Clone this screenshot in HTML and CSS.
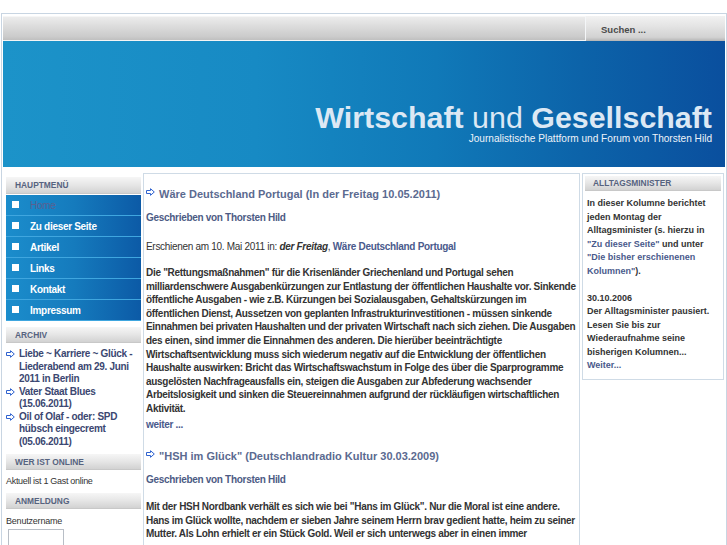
FILE: index.html
```html
<!DOCTYPE html>
<html lang="de">
<head>
<meta charset="utf-8">
<title>Wirtschaft und Gesellschaft</title>
<link rel="stylesheet" href="styles.css">
</head>
<body>
<div class="page">
  <div class="topbar">
    <div class="toolbar"></div>
    <div class="search">Suchen ...</div>
  </div>
  <div class="header">
    <div class="site-title"><b>Wirtschaft</b> und <b>Gesellschaft</b></div>
    <div class="site-sub">Journalistische Plattform und Forum von Thorsten Hild</div>
  </div>
  <div class="cols">
    <aside class="left">
      <div class="mod-head first">Hauptmenü</div>
      <ul class="menu">
        <li class="active"><span class="sq"></span>Home</li>
        <li><span class="sq"></span>Zu dieser Seite</li>
        <li><span class="sq"></span>Artikel</li>
        <li><span class="sq"></span>Links</li>
        <li><span class="sq"></span>Kontakt</li>
        <li><span class="sq"></span>Impressum</li>
      </ul>
      <div class="mod-head">Archiv</div>
      <ul class="archive">
        <li><svg class="arr" viewBox="0 0 9 8"><path d="M0.5 2.5H4.5V0.7L8.3 4L4.5 7.3V5.5H0.5Z"/></svg><span>Liebe ~ Karriere ~ Glück - Liederabend am 29. Juni 2011 in Berlin</span></li>
        <li><svg class="arr" viewBox="0 0 9 8"><path d="M0.5 2.5H4.5V0.7L8.3 4L4.5 7.3V5.5H0.5Z"/></svg><span>Vater Staat Blues (15.06.2011)</span></li>
        <li><svg class="arr" viewBox="0 0 9 8"><path d="M0.5 2.5H4.5V0.7L8.3 4L4.5 7.3V5.5H0.5Z"/></svg><span>Oil of Olaf - oder: SPD hübsch eingecremt (05.06.2011)</span></li>
      </ul>
      <div class="mod-head">Wer ist online</div>
      <p class="online">Aktuell ist 1 Gast online</p>
      <div class="mod-head">Anmeldung</div>
      <p class="label">Benutzername</p>
      <div class="field"></div>
    </aside>

    <main class="main">
      <article class="post">
        <h2 class="post-title"><svg class="arr" viewBox="0 0 9 8"><path d="M0.5 2.5H4.5V0.7L8.3 4L4.5 7.3V5.5H0.5Z"/></svg>Wäre Deutschland Portugal (In der Freitag 10.05.2011)</h2>
        <p class="author">Geschrieben von Thorsten Hild</p>
        <p class="source">Erschienen am 10. Mai 2011 in: <b><i>der Freitag</i></b>, <a class="lnk">Wäre Deutschland Portugal</a></p>
        <p class="body">Die "Rettungsmaßnahmen" für die Krisenländer Griechenland und Portugal sehen milliardenschwere Ausgabenkürzungen zur Entlastung der öffentlichen Haushalte vor. Sinkende öffentliche Ausgaben - wie z.B. Kürzungen bei Sozialausgaben, Gehaltskürzungen im öffentlichen Dienst, Aussetzen von geplanten Infrastrukturinvestitionen - müssen sinkende Einnahmen bei privaten Haushalten und der privaten Wirtschaft nach sich ziehen. Die Ausgaben des einen, sind immer die Einnahmen des anderen. Die hierüber beeinträchtigte Wirtschaftsentwicklung muss sich wiederum negativ auf die Entwicklung der öffentlichen Haushalte auswirken: Bricht das Wirtschaftswachstum in Folge des über die Sparprogramme ausgelösten Nachfrageausfalls ein, steigen die Ausgaben zur Abfederung wachsender Arbeitslosigkeit und sinken die Steuereinnahmen aufgrund der rückläufigen wirtschaftlichen Aktivität.</p>
        <a class="more">weiter ...</a>
      </article>
      <article class="post second">
        <h2 class="post-title"><svg class="arr" viewBox="0 0 9 8"><path d="M0.5 2.5H4.5V0.7L8.3 4L4.5 7.3V5.5H0.5Z"/></svg>"HSH im Glück" (Deutschlandradio Kultur 30.03.2009)</h2>
        <p class="author">Geschrieben von Thorsten Hild</p>
        <p class="body">Mit der HSH Nordbank verhält es sich wie bei "Hans im Glück". Nur die Moral ist eine andere. Hans im Glück wollte, nachdem er sieben Jahre seinem Herrn brav gedient hatte, heim zu seiner Mutter. Als Lohn erhielt er ein Stück Gold. Weil er sich unterwegs aber in einen immer</p>
      </article>
    </main>

    <aside class="right">
      <div class="box">
        <div class="mod-head">Alltagsminister</div>
        <p class="col-text">In dieser Kolumne berichtet jeden Montag der Alltagsminister (s. hierzu in <a class="lnk">"Zu dieser Seite"</a> und unter <a class="lnk">"Die bisher erschienenen Kolumnen"</a>).</p>
        <p class="col-text">30.10.2006<br>Der Alltagsminister pausiert. Lesen Sie bis zur Wiederaufnahme seine bisherigen Kolumnen...<br><a class="lnk">Weiter...</a></p>
      </div>
    </aside>
  </div>
</div>
</body>
</html>
```

FILE: styles.css
```css
html, body {
  margin: 0;
  padding: 0;
  background: #fff;
  overflow: hidden;
}
body {
  font-family: "Liberation Sans", Arial, sans-serif;
  color: #333;
}
.page {
  box-sizing: border-box;
  width: 726px;
  height: 532px;
  margin: 13px 0 0 1px;
  border: 1px solid #c8d5e2;
  border-bottom: none;
  padding: 2px 1px 0 1px;
  overflow: hidden;
}
.topbar {
  display: flex;
  height: 25px;
}
.toolbar {
  flex: 1;
  background: linear-gradient(#ececec, #dedede 35%, #cbcbcb 85%, #c0c0c0);
  border-top: 1px solid #f6f6f6;
  border-bottom: 1px solid #f4f4f4;
  box-sizing: border-box;
}
.search {
  width: 124px;
  padding-left: 15px;
  border-left: 1px solid #f4f6f8;
  background: linear-gradient(#f2f2f2, #e4e4e4 40%, #d2d2d2 85%, #b4b4b4);
  font-size: 9.5px;
  font-weight: bold;
  color: #4a4a4a;
  line-height: 27px;
}
.header {
  height: 126px;
  box-sizing: border-box;
  padding: 59px 13px 0 0;
  background: linear-gradient(to right, #1c93c9 0%, #178ac4 35%, #1079b8 60%, #0c63a9 80%, #0a4f9e 100%);
  text-align: right;
}
.site-title {
  font-size: 30.4px;
  line-height: 34px;
  color: #dce8f4;
  white-space: nowrap;
}
.site-title b { font-weight: bold; }
.site-sub {
  margin-top: -1px;
  font-size: 10.1px;
  line-height: 12px;
  color: #eef3f9;
}
.cols {
  display: flex;
  margin-top: 6px;
  align-items: flex-start;
}
.left {
  width: 135px;
  padding: 4px 2px 0 3px;
  flex: none;
}
.mod-head {
  height: 16px;
  line-height: 16px;
  padding-left: 9px;
  background: linear-gradient(#f6f6f6, #e6e6e6 50%, #d2d2d2);
  border-bottom: 1px solid #c8c8c8;
  font-size: 8.4px;
  font-weight: bold;
  text-transform: uppercase;
  color: #56637f;
  box-sizing: border-box;
}
.mod-head.first {
  height: 17px;
  line-height: 17px;
  margin-bottom: 1px;
}
.menu {
  list-style: none;
  margin: 0;
  padding: 0;
  background: linear-gradient(to right, #1b8dcc, #157bbd 50%, #0c5aa6);
}
.menu li {
  height: 20px;
  border-bottom: 1px solid #3fa6df;
  display: flex;
  align-items: center;
  padding-left: 6px;
  font-size: 10px;
  font-weight: bold;
  letter-spacing: -0.3px;
  color: #fff;
}
.menu li.active { color: #5a6090; font-weight: normal; }
.sq {
  width: 7px;
  height: 7px;
  background: #fff;
  margin-right: 11px;
  margin-top: -2px;
  flex: none;
}
.left .mod-head:not(.first) { margin-top: 6px; }
.archive {
  list-style: none;
  margin: 5px 0 0 0;
  padding: 0;
}
.archive li {
  display: flex;
  font-size: 10px;
  font-weight: bold;
  letter-spacing: -0.3px;
  line-height: 12.5px;
  color: #3b4771;
}
.arr {
  width: 9px;
  height: 8px;
  flex: none;
  fill: #fff;
  stroke: #2f62cf;
  stroke-width: 1;
}
.archive .arr {
  margin: 2px 4px 0 0;
}
.online {
  margin: 5px 0 0 0;
  font-size: 9px;
  line-height: 12px;
  letter-spacing: -0.3px;
  color: #333;
}
.label {
  margin: 6px 0 0 0;
  font-size: 9px;
  line-height: 12px;
  letter-spacing: -0.2px;
  color: #333;
}
.field {
  margin: 2px 0 0 2px;
  width: 54px;
  height: 20px;
  border: 1px solid #b8bec6;
  background: #fff;
}
.main {
  width: 432px;
  flex: none;
  border: 1px solid #cfdbe6;
  border-bottom: none;
  padding: 12px 1px 0 2px;
  min-height: 400px;
}
.post-title {
  margin: 0;
  display: flex;
  align-items: flex-start;
  font-size: 11px;
  line-height: 16px;
  font-weight: bold;
  color: #5b6a90;
}
.post-title .arr {
  margin: 2px 4px 0 0;
}
.author {
  margin: 9px 0 0 0;
  font-size: 10px;
  line-height: 14px;
  font-weight: bold;
  letter-spacing: -0.3px;
  color: #4d5b84;
}
.source {
  margin: 15px 0 0 0;
  font-size: 10px;
  line-height: 14px;
  letter-spacing: -0.3px;
  color: #333;
}
.lnk {
  font-weight: bold;
  color: #4a5a8c;
}
.body {
  margin: 12px 0 0 0;
  font-size: 10px;
  line-height: 13.6px;
  font-weight: bold;
  letter-spacing: -0.3px;
  color: #333;
}
.second .body { margin-top: 13px; }
.more {
  display: block;
  margin-top: 2px;
  font-size: 10px;
  line-height: 13.6px;
  font-weight: bold;
  letter-spacing: -0.3px;
  color: #4a5a8c;
}
.second { margin-top: 17px; }
.right {
  flex: none;
  width: 142px;
  margin-left: 2px;
}
.box {
  border: 1px solid #cfdbe6;
  padding: 2px 2px 6px 2px;
}
.box .mod-head {
  height: 15px;
  line-height: 15px;
  padding-left: 8px;
}
.col-text {
  margin: 6px 0 0 2px;
  font-size: 9px;
  line-height: 13.5px;
  font-weight: bold;
  color: #333;
}
.col-text + .col-text { margin-top: 13.5px; }
```
